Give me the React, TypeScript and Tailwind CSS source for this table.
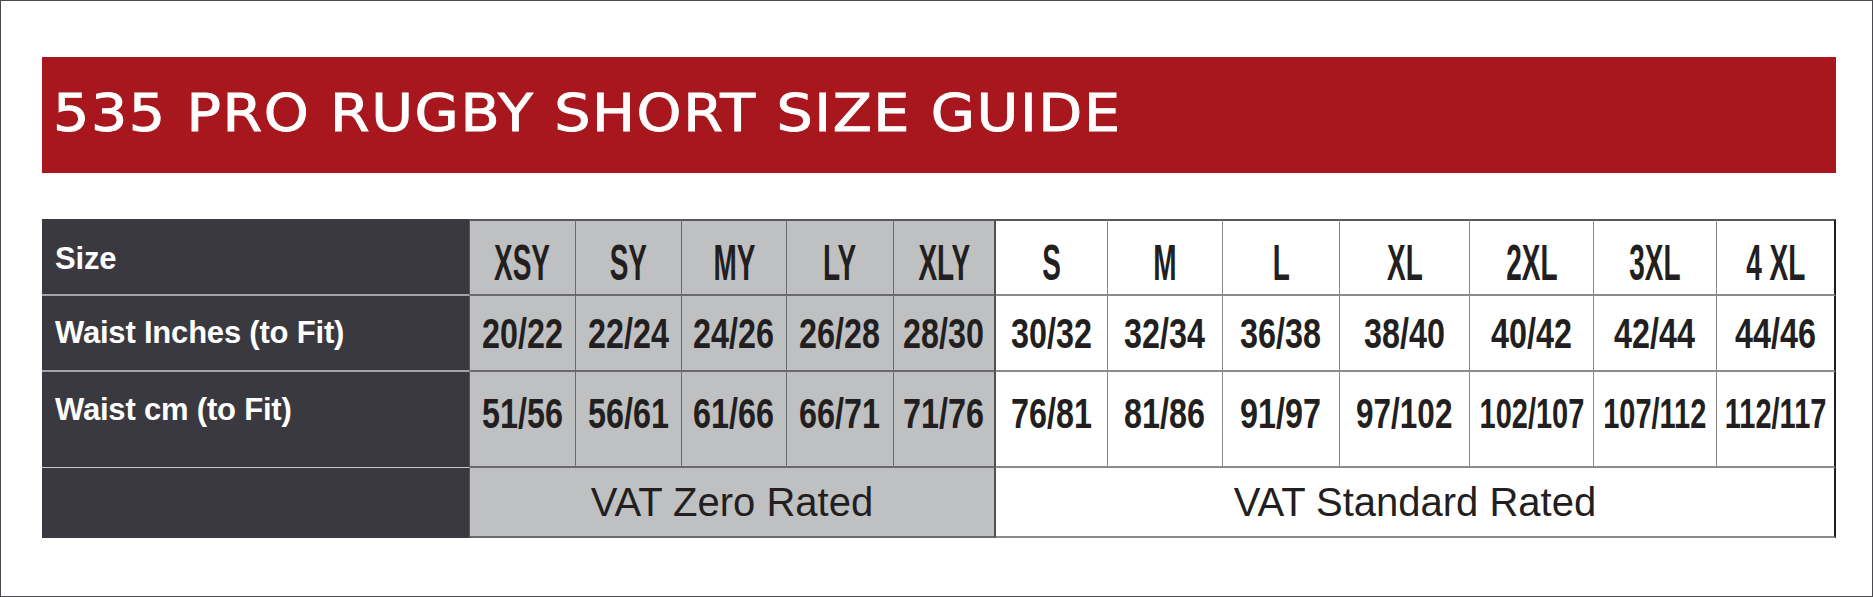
import React from "react"

const sizes = ["XSY", "SY", "MY", "LY", "XLY", "S", "M", "L", "XL", "2XL", "3XL", "4 XL"]
const inches = ["20/22", "22/24", "24/26", "26/28", "28/30", "30/32", "32/34", "36/38", "38/40", "40/42", "42/44", "44/46"]
const cms = ["51/56", "56/61", "61/66", "66/71", "71/76", "76/81", "81/86", "91/97", "97/102", "102/107", "107/112", "112/117"]

const condensed = { fontFamily: "'Liberation Sans', Arial, sans-serif" }

// border colours differ between the grey (youth) and white (adult) blocks
function cellClass(i: number) {
  if (i < 4) return "bg-[#bfc0c2] border-r border-b-2 border-[#6a6a6e]"
  if (i === 4) return "bg-[#bfc0c2] border-r-2 border-b-2 border-[#6a6a6e] border-r-[#505054]"
  if (i === 11) return "bg-white border-r-2 border-b-2 border-[#8a8a8e] border-r-[#1e1e1e]"
  return "bg-white border-r border-b-2 border-[#8a8a8e]"
}

// the print uses a very condensed face, squeeze by text length
function squeeze(v: string) {
  if (v.length >= 7) return "scale-x-[0.69]"
  if (v.length === 6) return "scale-x-[0.75]"
  return "scale-x-[0.77]"
}

function Label({ text, className }: { text: string; className: string }) {
  return (
    <div
      className={`flex bg-[#3a393f] pl-[13px] text-[31px] font-bold leading-none tracking-[-0.2px] text-white border-r border-[#55555a] ${className}`}
      style={{ fontFamily: "'Liberation Sans', Arial, sans-serif" }}
    >
      {text}
    </div>
  )
}

export default function App() {
  return (
    <div className="w-[1873px] h-[597px] border border-[#4a4a4e] bg-white pl-[41px] pt-[56px]">
      {/* Title banner */}
      <div className="flex h-[116px] w-[1794px] items-center bg-[#a8171d] pl-[11px] pb-[3px]">
        <h1
          className="origin-left scale-x-[1.12] text-[51px] font-normal leading-none tracking-[1.4px] text-white [-webkit-text-stroke:0.9px_white]"
          style={{ fontFamily: "'DejaVu Sans', Verdana, sans-serif" }}
        >
          535 PRO RUGBY SHORT SIZE GUIDE
        </h1>
      </div>

      {/* Size table */}
      <div className="mt-[46px] grid w-[1794px] grid-cols-[428px_106px_106px_105px_107px_102px_112px_115px_117px_130px_124px_123px_119px] grid-rows-[77px_76px_96px_70px]">
        <Label text="Size" className="items-center pt-[3px] border-b-2 border-b-[#a3a3a8]" />
        {sizes.map((s, i) => (
          <div key={s} className={`flex items-center justify-center border-t-2 border-t-[#58585c] pt-[11px] ${cellClass(i)}`}>
            <span className="inline-block scale-x-[0.56] text-[50px] font-bold leading-none text-[#231f20]" style={condensed}>
              {s}
            </span>
          </div>
        ))}

        <Label text="Waist Inches (to Fit)" className="items-center pb-[2px] border-b-2 border-b-[#a3a3a8]" />
        {inches.map((v, i) => (
          <div key={v} className={`flex items-center justify-center pt-[2px] ${cellClass(i)}`}>
            <span className={`inline-block ${squeeze(v)} text-[42px] font-bold leading-none text-[#231f20]`} style={condensed}>
              {v}
            </span>
          </div>
        ))}

        <Label text="Waist cm (to Fit)" className="items-center pb-[20px] pl-[10px] border-b border-b-[#c8c8cc]" />
        {cms.map((v, i) => (
          <div key={v} className={`flex items-center justify-center pb-[10px] ${cellClass(i)}`}>
            <span className={`inline-block ${squeeze(v)} text-[42px] font-bold leading-none text-[#231f20]`} style={condensed}>
              {v}
            </span>
          </div>
        ))}

        <div className="bg-[#3a393f] border-r border-[#55555a]" />
        <div
          className="col-span-5 flex items-center justify-center bg-[#bfc0c2] border-r-2 border-b-2 border-[#6a6a6e] border-r-[#505054] text-[40px] leading-none text-[#231f20]"
          style={{ fontFamily: "'Liberation Sans', Arial, sans-serif" }}
        >
          VAT Zero Rated
        </div>
        <div
          className="col-span-7 flex items-center justify-center bg-white border-r-2 border-b-2 border-[#8a8a8e] border-r-[#1e1e1e] text-[40px] leading-none text-[#231f20]"
          style={{ fontFamily: "'Liberation Sans', Arial, sans-serif" }}
        >
          VAT Standard Rated
        </div>
      </div>
    </div>
  )
}
